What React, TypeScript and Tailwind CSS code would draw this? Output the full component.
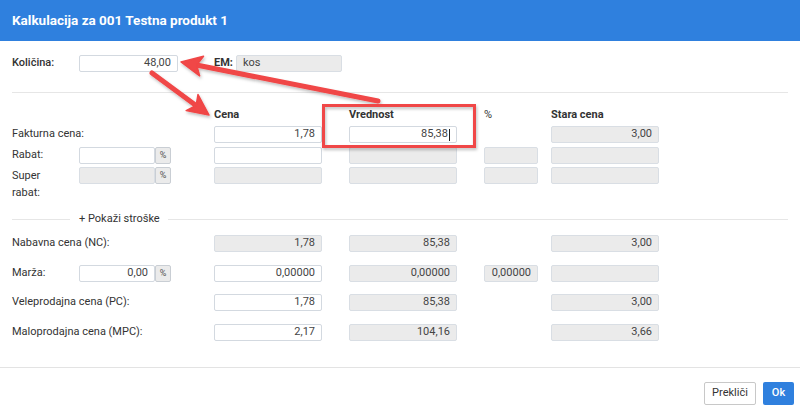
import React from "react";

const RED = "#f04646";

function Field({
  w,
  value = "",
  grey = false,
  focus = false,
  left = false,
}: {
  w: string;
  value?: string;
  grey?: boolean;
  focus?: boolean;
  left?: boolean;
}) {
  return (
    <div
      className={
        "h-[17px] rounded-[2px] border px-[6px] flex items-center text-[11px] text-[#444] " +
        w +
        " " +
        (left ? "justify-start " : "justify-end ") +
        (grey ? "bg-[#ebebeb] border-[#d9dee4] " : "bg-white border-[#d3d9e0] ") +
        (focus ? "border-[#6f9fe6]" : "")
      }
    >
      <span>{value}</span>
      {focus && <span className="w-px h-[12px] bg-[#222] ml-[1px]" />}
    </div>
  );
}

function Small({ value = "", grey = false }: { value?: string; grey?: boolean }) {
  return (
    <div className="w-[92px] flex">
      <Field w="w-[76px]" value={value} grey={grey} />
      <div className="w-[16px] h-[17px] bg-[#ebebeb] border border-[#c9ced4] rounded-[2px] flex items-center justify-center text-[9px] text-[#555]">
        %
      </div>
    </div>
  );
}

// columns: Cena 214, Vrednost 349, % 484, Stara cena 551
function Cols({
  cena,
  vred,
  pct,
  stara,
}: {
  cena?: React.ReactNode;
  vred?: React.ReactNode;
  pct?: React.ReactNode;
  stara?: React.ReactNode;
}) {
  return (
    <>
      <div className="w-[43px]" />
      <div className="w-[108px]">{cena}</div>
      <div className="w-[27px]" />
      <div className="w-[108px]">{vred}</div>
      <div className="w-[27px]" />
      <div className="w-[54px]">{pct}</div>
      <div className="w-[13px]" />
      <div className="w-[108px]">{stara}</div>
    </>
  );
}

function arrowHead(ax: number, ay: number, bx: number, by: number, len = 21, half = 10) {
  const dx = bx - ax;
  const dy = by - ay;
  const d = Math.hypot(dx, dy);
  const ux = dx / d;
  const uy = dy / d;
  const px = -uy;
  const py = ux;
  const cx = bx - ux * len;
  const cy = by - uy * len;
  return {
    shaftEnd: [cx + ux * 4, cy + uy * 4],
    points: `${bx},${by} ${cx + px * half},${cy + py * half} ${cx + ux * 5},${cy + uy * 5} ${cx - px * half},${cy - py * half}`,
  };
}

function Arrow({ ax, ay, bx, by }: { ax: number; ay: number; bx: number; by: number }) {
  const h = arrowHead(ax, ay, bx, by);
  return (
    <g>
      <line x1={ax} y1={ay} x2={h.shaftEnd[0]} y2={h.shaftEnd[1]} stroke={RED} strokeWidth={5} strokeLinecap="round" />
      <polygon points={h.points} fill={RED} stroke={RED} strokeWidth={1.5} strokeLinejoin="round" />
    </g>
  );
}

export default function App() {
  return (
    <div className="relative w-[800px] h-[415px] bg-white overflow-hidden font-[family-name:Roboto,sans-serif] text-[11px] text-[#333]">
      <div className="h-[41px] bg-[#2f80de] flex items-center px-[12px]">
        <h1 className="text-white font-bold text-[13.5px]">Kalkulacija za 001 Testna produkt 1</h1>
      </div>

      <div className="px-[12px]">
        <div className="flex items-center h-[17px] mt-[14px]">
          <div className="w-[67px] font-medium">Količina:</div>
          <Field w="w-[99px]" value="48,00" />
          <div className="w-[36px]" />
          <div className="w-[22px] font-bold">EM:</div>
          <Field w="w-[106px]" value="kos" grey left />
        </div>

        <div className="mt-[20px] border-t border-[#e6e6e6]" />

        <div className="flex items-center h-[14px] mt-[15px] font-bold">
          <div className="w-[159px]" />
          <Cols cena="Cena" vred="Vrednost" pct={<span className="font-normal">%</span>} stara="Stara cena" />
        </div>

        <div className="flex items-center h-[17px] mt-[4px]">
          <div className="w-[159px]">Fakturna cena:</div>
          <Cols
            cena={<Field w="w-[108px]" value="1,78" />}
            vred={<Field w="w-[108px]" value="85,38" focus />}
            stara={<Field w="w-[108px]" value="3,00" grey />}
          />
        </div>

        <div className="flex items-center h-[17px] mt-[4px]">
          <div className="w-[67px]">Rabat:</div>
          <Small />
          <Cols
            cena={<Field w="w-[108px]" />}
            vred={<Field w="w-[108px]" grey />}
            pct={<Field w="w-[54px]" grey />}
            stara={<Field w="w-[108px]" grey />}
          />
        </div>

        <div className="flex items-start mt-[3px]">
          <div className="w-[67px] leading-[17px]">
            Super
            <br />
            rabat:
          </div>
          <Small grey />
          <Cols
            cena={<Field w="w-[108px]" grey />}
            vred={<Field w="w-[108px]" grey />}
            pct={<Field w="w-[54px]" grey />}
            stara={<Field w="w-[108px]" grey />}
          />
        </div>

        <div className="flex items-center h-[14px] mt-[11px]">
          <div className="w-[58px] border-t border-[#e6e6e6]" />
          <div className="w-[98px] pl-[9px] text-[#333]">+ Pokaži stroške</div>
          <div className="flex-1 border-t border-[#e6e6e6]" />
        </div>

        <div className="flex items-center h-[17px] mt-[9px]">
          <div className="w-[159px]">Nabavna cena (NC):</div>
          <Cols
            cena={<Field w="w-[108px]" value="1,78" grey />}
            vred={<Field w="w-[108px]" value="85,38" grey />}
            stara={<Field w="w-[108px]" value="3,00" grey />}
          />
        </div>

        <div className="flex items-center h-[17px] mt-[13px]">
          <div className="w-[67px]">Marža:</div>
          <Small value="0,00" />
          <Cols
            cena={<Field w="w-[108px]" value="0,00000" />}
            vred={<Field w="w-[108px]" value="0,00000" grey />}
            pct={<Field w="w-[54px]" value="0,00000" grey />}
            stara={<Field w="w-[108px]" grey />}
          />
        </div>

        <div className="flex items-center h-[17px] mt-[12px]">
          <div className="w-[159px]">Veleprodajna cena (PC):</div>
          <Cols
            cena={<Field w="w-[108px]" value="1,78" />}
            vred={<Field w="w-[108px]" value="85,38" grey />}
            stara={<Field w="w-[108px]" value="3,00" grey />}
          />
        </div>

        <div className="flex items-center h-[17px] mt-[13px]">
          <div className="w-[159px]">Maloprodajna cena (MPC):</div>
          <Cols
            cena={<Field w="w-[108px]" value="2,17" />}
            vred={<Field w="w-[108px]" value="104,16" grey />}
            stara={<Field w="w-[108px]" value="3,66" grey />}
          />
        </div>
      </div>

      <div className="mt-[26px] border-t border-[#e3e3e3] flex justify-end gap-[7px] pt-[14px] pr-[6px]">
        <button className="h-[23px] w-[52px] bg-white border border-[#c8c8c8] rounded-[2px] text-[11px] text-[#333]">
          Prekliči
        </button>
        <button className="h-[23px] w-[31px] bg-[#2f80de] rounded-[2px] text-[11px] text-white font-medium">
          Ok
        </button>
      </div>

      {/* annotations drawn over the dialog */}
      <svg className="absolute inset-0 pointer-events-none" width={800} height={415}>
        <defs>
          <filter id="sh" x="-20%" y="-20%" width="140%" height="140%">
            <feDropShadow dx="1" dy="2" stdDeviation="1.5" floodColor="#000" floodOpacity="0.25" />
          </filter>
        </defs>
        <g filter="url(#sh)">
          <rect x={323.5} y={105.5} width={151} height={41} fill="none" stroke={RED} strokeWidth={3} />
          <Arrow ax={378} ay={101} bx={181} by={62} />
          <Arrow ax={152} ay={73} bx={209} by={115} />
        </g>
      </svg>
    </div>
  );
}
